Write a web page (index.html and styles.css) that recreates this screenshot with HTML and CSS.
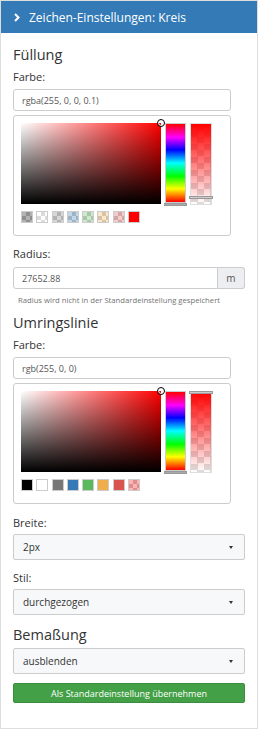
FILE: index.html
```html
<!DOCTYPE html>
<html lang="de">
<head>
    <meta charset="UTF-8">
    <meta name="viewport" content="width=device-width, initial-scale=1.0">
    <title>Zeichen-Einstellungen</title>

    <link rel="stylesheet" href="styles.css">

</head>

<body>

    <div class="panel">

        <div class="panel-heading">
            <svg class="chevron" width="6" height="9" viewBox="0 0 6 9">
                <polyline points="1,1 4.5,4.5 1,8" fill="none" stroke="#fff" stroke-width="2"/>
            </svg>
            <span>Zeichen-Einstellungen: Kreis</span>
        </div>

        <div class="panel-body">

            <h4 class="section first">Füllung</h4>
            <label class="label">Farbe:</label>
            <input class="input input-color" type="text" value="rgba(255, 0, 0, 0.1)">

            <div class="picker">
                <div class="picker-main">
                    <div class="sv"><span class="sv-marker"></span></div>
                    <div class="hue"><span class="hue-handle"></span></div>
                    <div class="alpha"><span class="alpha-handle" style="top: 72px"></span></div>
                </div>
                <div class="swatches">
                    <span class="swatch" style="--c: rgba(0,0,0,0.3)"></span>
                    <span class="swatch" style="--c: rgba(255,255,255,0.3)"></span>
                    <span class="swatch" style="--c: rgba(119,119,119,0.3)"></span>
                    <span class="swatch" style="--c: rgba(51,122,183,0.3)"></span>
                    <span class="swatch" style="--c: rgba(92,184,92,0.3)"></span>
                    <span class="swatch" style="--c: rgba(240,173,78,0.3)"></span>
                    <span class="swatch" style="--c: rgba(217,83,79,0.3)"></span>
                    <span class="swatch" style="--c: #ff0000"></span>
                </div>
            </div>

            <label class="label label-gap">Radius:</label>
            <div class="input-group">
                <input class="input" type="text" value="27652.88">
                <span class="addon">m</span>
            </div>
            <p class="help">Radius wird nicht in der Standardeinstellung gespeichert</p>

            <h4 class="section tight">Umringslinie</h4>
            <label class="label">Farbe:</label>
            <input class="input input-color" type="text" value="rgb(255, 0, 0)">

            <div class="picker">
                <div class="picker-main">
                    <div class="sv"><span class="sv-marker"></span></div>
                    <div class="hue"><span class="hue-handle"></span></div>
                    <div class="alpha"><span class="alpha-handle" style="top: -1px"></span></div>
                </div>
                <div class="swatches">
                    <span class="swatch" style="--c: #000"></span>
                    <span class="swatch" style="--c: #fff"></span>
                    <span class="swatch" style="--c: #777"></span>
                    <span class="swatch" style="--c: #337ab7"></span>
                    <span class="swatch" style="--c: #5cb85c"></span>
                    <span class="swatch" style="--c: #f0ad4e"></span>
                    <span class="swatch" style="--c: #d9534f"></span>
                    <span class="swatch" style="--c: rgba(255,0,0,0.3)"></span>
                </div>
            </div>

            <label class="label label-gap wide">Breite:</label>
            <div class="select-wrap">
                <select class="select">
                    <option>2px</option>
                </select>
            </div>

            <label class="label label-gap">Stil:</label>
            <div class="select-wrap">
                <select class="select">
                    <option>durchgezogen</option>
                </select>
            </div>

            <h4 class="section">Bemaßung</h4>
            <div class="select-wrap">
                <select class="select">
                    <option>ausblenden</option>
                </select>
            </div>

            <button class="btn">Als Standardeinstellung übernehmen</button>

        </div>

    </div>

</body>

</html>
```

FILE: styles.css
```css
*, html {
    box-sizing: border-box;
    margin: 0;
    padding: 0;
}

body {
    font-family: "Open Sans", "Noto Sans", sans-serif;
    color: #333;
    background: #fff;
}

.panel {
    width: 258px;
    height: 729px;
    border: 1px solid #ddd;
}

.panel-heading {
    height: 32px;
    background: #337ab7;
    color: #fff;
    display: flex;
    align-items: center;
    gap: 9px;
    padding-left: 13px;
    font-size: 12px;
}

.chevron {
    display: block;
}

.panel-body {
    padding: 0 12px;
}

.section {
    font-size: 14.5px;
    font-weight: 400;
    line-height: 20px;
    margin-top: 10px;
}

.section.first {
    margin-top: 12px;
}

.section.tight {
    margin-top: 8px;
}

.label {
    display: block;
    font-size: 11px;
    line-height: 16px;
    margin-top: 4px;
}

.label-gap {
    margin-top: 10px;
}

.label-gap.wide {
    margin-top: 11px;
}

.input {
    display: block;
    height: 22px;
    border: 1px solid #ccc;
    border-radius: 3px;
    padding: 0 8px;
    font: 9px "Open Sans", sans-serif;
    color: #555;
    background: #fff;
    margin-top: 4px;
    outline: none;
}

.input-color {
    width: 218px;
}

/* colour picker */

.picker {
    width: 218px;
    margin-top: 4px;
    border: 1px solid #ccc;
    border-radius: 3px;
    padding: 7px 7px 12px;
}

.picker-main {
    display: flex;
    gap: 4px;
    height: 81px;
}

.sv {
    position: relative;
    width: 140px;
    background:
        linear-gradient(to top, #000, rgba(0,0,0,0)),
        linear-gradient(to right, #fff, #f00);
}

.sv-marker {
    position: absolute;
    right: -4px;
    top: -4px;
    width: 8px;
    height: 8px;
    border-radius: 50%;
    border: 1px solid #000;
    box-shadow: inset 0 0 0 1px #fff;
}

.hue {
    position: relative;
    width: 21px;
    height: 80px;
    border: 1px solid #ccc;
    background: linear-gradient(to bottom, #f00, #f0f 17%, #00f 33%, #0ff 50%, #0f0 67%, #ff0 83%, #f00);
}

.hue-handle {
    position: absolute;
    left: -2px;
    right: -2px;
    bottom: -4px;
    height: 3px;
    background: #aaa;
    border: 1px solid #999;
}

.alpha {
    position: relative;
    width: 22px;
    height: 82px;
    border: 1px solid #ddd;
    background:
        linear-gradient(to bottom, #f00, rgba(255,0,0,0)),
        conic-gradient(#ddd 90deg, #fff 90deg 180deg, #ddd 180deg 270deg, #fff 270deg);
    background-size: 100% 100%, 13px 13px;
}

.alpha-handle {
    position: absolute;
    left: -2px;
    right: -2px;
    height: 3px;
    background: #ccc;
    border: 1px solid #999;
}

.swatches {
    display: flex;
    gap: 3.3px;
    margin-top: 7px;
}

.swatch {
    width: 12px;
    height: 12px;
    border: 1px solid #ccc;
    background:
        linear-gradient(var(--c), var(--c)),
        conic-gradient(#ccc 90deg, #fff 90deg 180deg, #ccc 180deg 270deg, #fff 270deg);
    background-size: 100% 100%, 8px 8px;
}

/* radius */

.input-group {
    display: flex;
    margin-top: 5px;
}

.input-group .input {
    flex: 1;
    margin-top: 0;
    border-radius: 3px 0 0 3px;
}

.addon {
    width: 27px;
    height: 22px;
    border: 1px solid #ccc;
    border-left: none;
    border-radius: 0 3px 3px 0;
    background: #eceef1;
    display: flex;
    align-items: center;
    justify-content: center;
    font-size: 10px;
    color: #555;
}

.help {
    font-size: 7.7px;
    line-height: 10px;
    color: #737373;
    margin-top: 6px;
    padding-left: 5px;
}

/* selects */

.select-wrap {
    position: relative;
    margin-top: 3px;
}

.select-wrap::after {
    content: "";
    position: absolute;
    right: 12px;
    top: 12px;
    border-left: 2.5px solid transparent;
    border-right: 2.5px solid transparent;
    border-top: 3px solid #333;
}

.select {
    display: block;
    width: 232px;
    height: 26px;
    appearance: none;
    -webkit-appearance: none;
    border: 1px solid #ccc;
    border-radius: 2px;
    background: #f7f8fa;
    padding: 0 9px;
    font: 10px "Open Sans", sans-serif;
    color: #333;
    outline: none;
}

.btn {
    display: block;
    width: 232px;
    height: 20px;
    margin-top: 9px;
    background: #43a047;
    border: 1px solid #3a8d3e;
    border-radius: 2px;
    color: #fff;
    font: 9px "Open Sans", sans-serif;
}
```
